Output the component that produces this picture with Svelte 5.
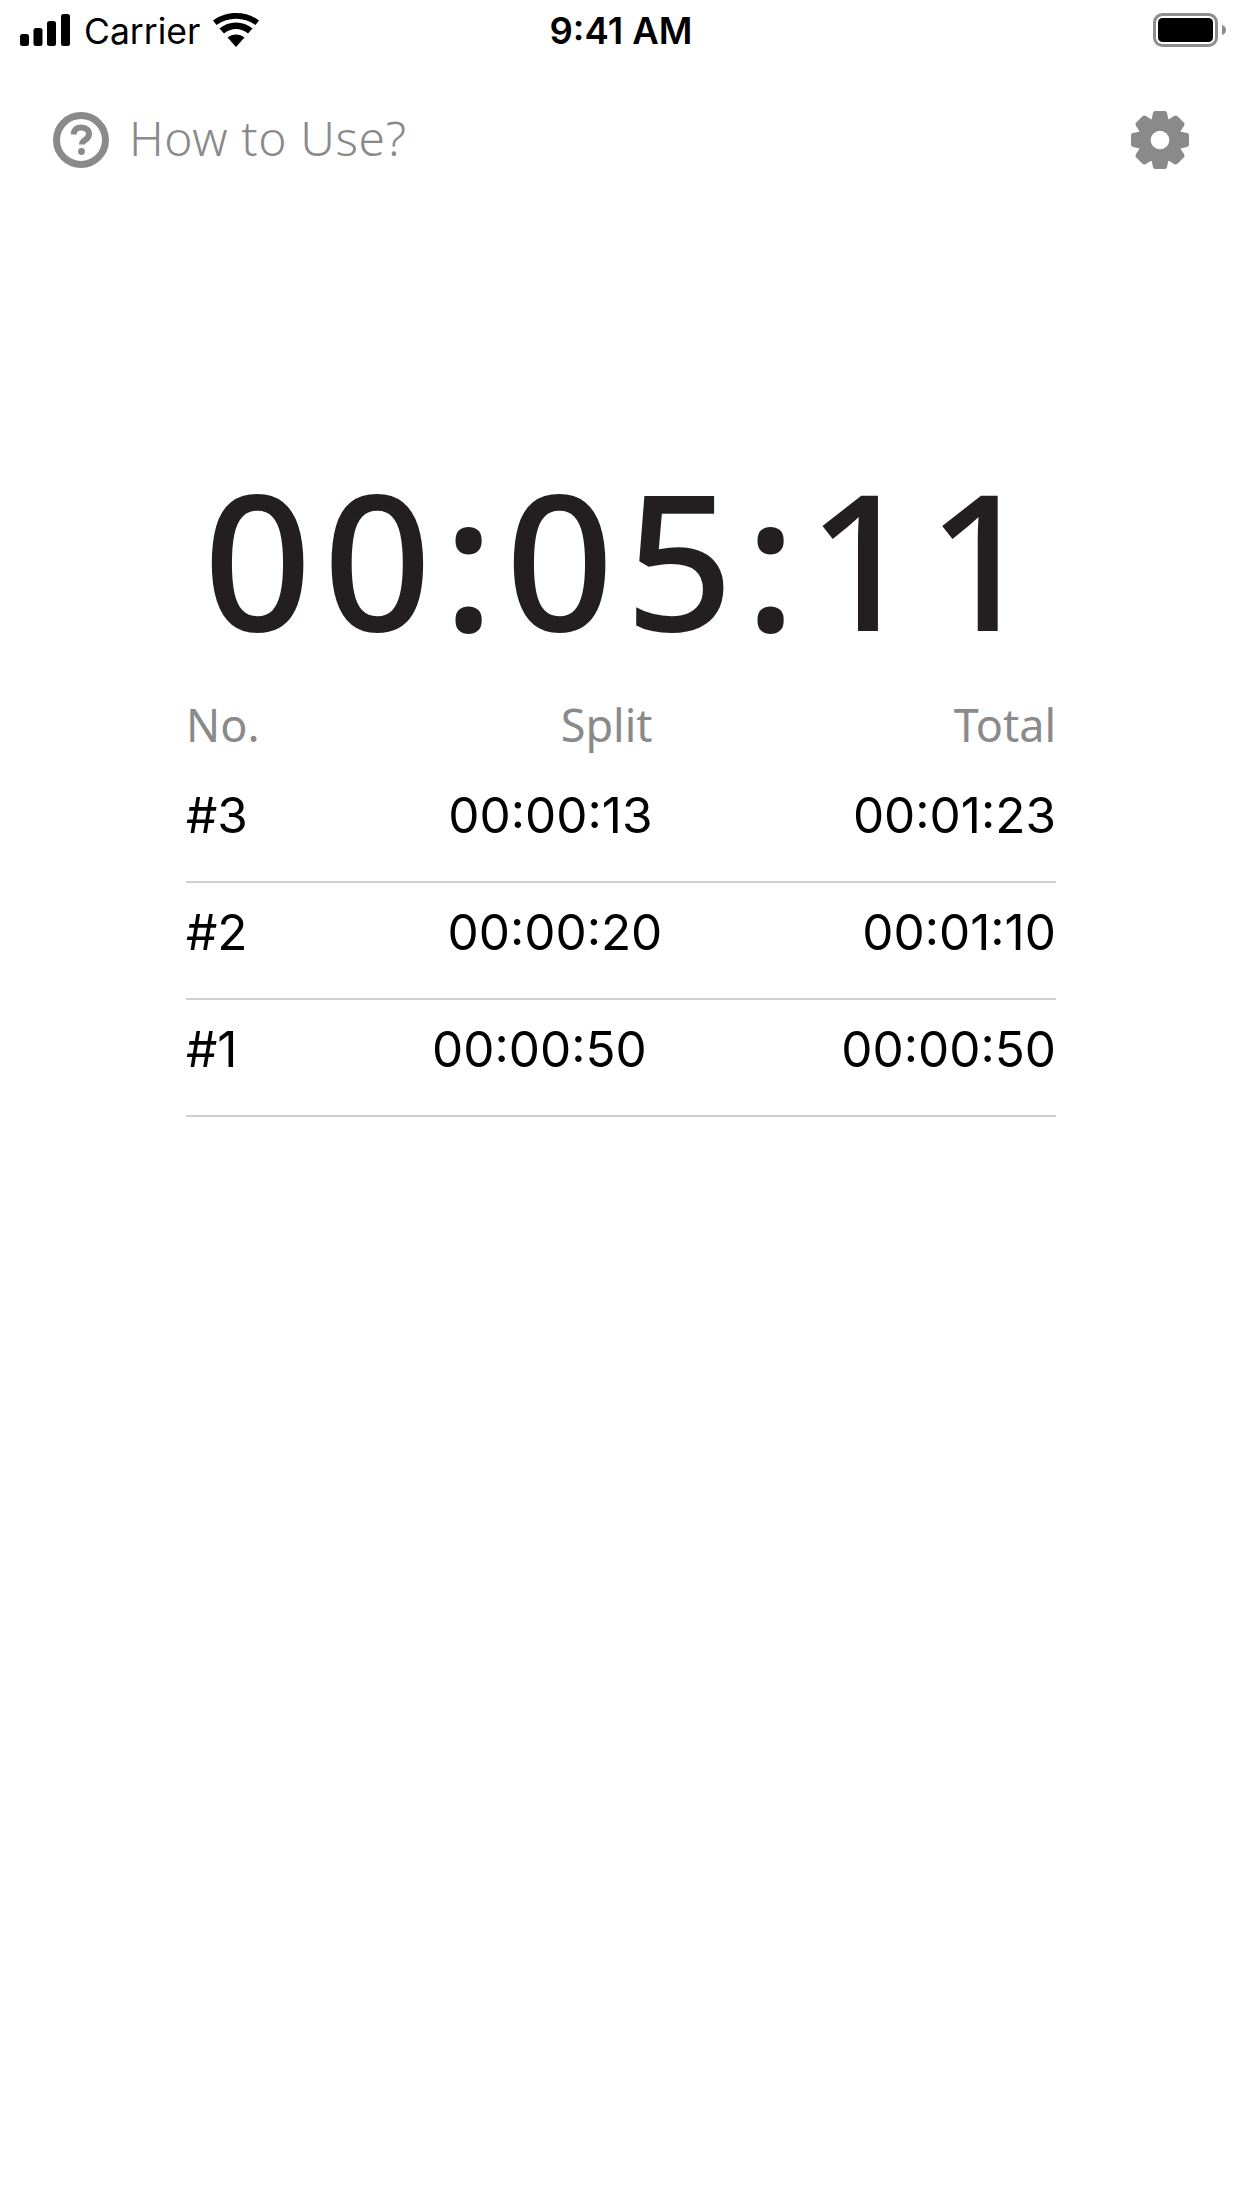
<script>
  const rows = [
    ['#3', '00:00:13', '00:01:23'],
    ['#2', '00:00:20', '00:01:10'],
    ['#1', '00:00:50', '00:00:50']
  ];
  function gearPath() {
    const pts = [];
    const teeth = 8;
    for (let i = 0; i < teeth; i++) {
      const a = (i * 2 * Math.PI) / teeth - Math.PI / 2;
      for (const [off, r] of [[-0.3, 19.5], [-0.155, 26.5], [0.155, 26.5], [0.3, 19.5]]) {
        pts.push((29 + r * Math.cos(a + off)).toFixed(2) + ' ' + (29 + r * Math.sin(a + off)).toFixed(2));
      }
    }
    return 'M' + pts.join('L') + 'Z';
  }
</script>

<div class="screen">
  <div class="status">
    <div class="status-left">
      <svg width="50" height="32" viewBox="0 0 50 32" class="signal">
        <rect x="0" y="20" width="9" height="12" rx="2.5" />
        <rect x="13.500" y="14" width="9" height="18" rx="2.5" />
        <rect x="27" y="7" width="9" height="25" rx="2.5" />
        <rect x="41" y="0" width="9" height="32" rx="2.5" />
      </svg>
      <span class="carrier">Carrier</span>
      <svg width="46" height="34" viewBox="0 0 46 34" class="wifi">
        <path d="M23 34 L14.500 24.500 C19.500 20.500 26.500 20.500 31.500 24.500 Z" />
        <path d="M11 20.500 L6.500 15.500 C15.500 7.500 30.500 7.500 39.500 15.500 L35 20.500 C28 14.500 18 14.500 11 20.500 Z" />
        <path d="M3.500 12 L0 7.500 C13 -2.500 33 -2.500 46 7.500 L42.500 12 C31 3.500 15 3.500 3.500 12 Z" />
      </svg>
    </div>
    <span class="clock">9:41 AM</span>
    <svg width="73" height="34" viewBox="0 0 73 34" class="battery">
      <rect x="1.500" y="1.500" width="62" height="31" rx="8" class="shell" />
      <rect x="5" y="5" width="55" height="24" rx="4.500" />
      <path d="M69 12 C71.500 12.800 73 14.500 73 17 C73 19.500 71.500 21.200 69 22 Z" class="nub" />
    </svg>
  </div>

  <div class="top">
    <div class="help">
      <svg width="56" height="56" viewBox="0 0 56 56">
        <circle cx="28" cy="28" r="24.500" class="ring" />
        <path d="M20.500 22.500 C21 17.800 24 15.500 28.300 15.500 C33 15.500 36 18.200 36 22 C36 25 34.300 26.500 32 28 C30 29.300 29 30.300 29 32.500" class="hook" />
        <circle cx="28.500" cy="39.500" r="3.400" class="dot" />
      </svg>
      <span>How to Use?</span>
    </div>
    <svg width="58" height="58" viewBox="0 0 58 58" class="gear">
      <path d={gearPath()} class="gear-body" />
      <circle cx="29" cy="29" r="9.300" class="gear-hole" />
    </svg>
  </div>

  <div class="timer">00:05:11</div>

  <div class="laps">
    <div class="row head"><span>No.</span><span>Split</span><span>Total</span></div>
    {#each rows as r}
      <div class="row lap"><span>{r[0]}</span><span>{r[1]}</span><span>{r[2]}</span></div>
    {/each}
  </div>
</div>

<style>
  :global(body) { margin: 0; background: #fff; }
  .screen {
    width: 1242px;
    height: 2208px;
    background: #fff;
    overflow: hidden;
    display: flex;
    flex-direction: column;
    font-family: Inter, "Liberation Sans", sans-serif;
  }
  .status {
    padding: 13px 16px 0 20px;
    height: 34px;
    display: flex;
    justify-content: space-between;
    align-items: flex-start;
    position: relative;
  }
  .status-left { display: flex; align-items: flex-start; }
  .signal { margin-top: 1px; fill: #000; }
  .carrier {
    margin-left: 14px;
    font-size: 35.500px;
    line-height: 38px;
    color: #000;
  }
  .wifi { margin-left: 13px; fill: #000; }
  .clock {
    position: absolute;
    left: 0;
    right: 0;
    top: 11px;
    text-align: center;
    font-size: 36.500px;
    line-height: 40px;
    font-weight: 600;
    color: #000;
  }
  .battery { fill: #000; }
  .shell { fill: none; stroke: #8e8e8e; stroke-width: 3; }
  .nub { fill: #8e8e8e; }
  .top {
    margin-top: 64px;
    padding: 0 53px 0 53px;
    display: flex;
    justify-content: space-between;
    align-items: center;
    height: 58px;
  }
  .help {
    display: flex;
    align-items: center;
    gap: 20px;
    color: #8a8a8a;
    font-family: "Noto Sans", sans-serif;
    font-weight: 300;
    font-size: 48px;
    line-height: 58px;
    letter-spacing: 0.6px;
  }
  .help span { margin-top: -4px; }
  .ring { fill: none; stroke: #8a8a8a; stroke-width: 7; }
  .hook { fill: none; stroke: #8a8a8a; stroke-width: 6; }
  .dot { fill: #8a8a8a; }
  .gear-body { fill: #8a8a8a; stroke: #8a8a8a; stroke-width: 6; stroke-linejoin: round; }
  .gear-hole { fill: #fff; }
  .timer {
    margin-top: 269px;
    height: 245px;
    padding-left: 8px;
    text-align: center;
    font-family: "Noto Sans", sans-serif;
    font-weight: 500;
    font-size: 190px;
    line-height: 240px;
    color: #231f20;
    letter-spacing: 11px;
  }
  .laps {
    margin: 12px 186px 0;
    display: flex;
    flex-direction: column;
  }
  .row {
    display: flex;
    justify-content: space-between;
  }
  .head {
    color: #8a8a8a;
    font-family: "Noto Sans", sans-serif;
    font-size: 45px;
    line-height: 60px;
    height: 70px;
  }
  .lap {
    color: #000;
    font-size: 49.500px;
    line-height: 60px;
    height: 57px;
    padding-top: 19px;
    padding-bottom: 39px;
    border-bottom: 2px solid #cfcfcf;
  }
  .lap:nth-child(2) { padding-top: 20px; }
</style>
